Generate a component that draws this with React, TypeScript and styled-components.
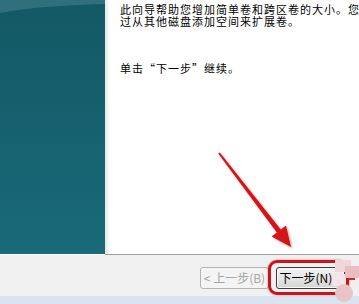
import styled, {createGlobalStyle} from "styled-components";

const TEAL_TOP = "rgb(19, 88, 101)";
const TEAL_BOTTOM = "rgb(25, 106, 122)";
const HIGHLIGHT_RED = "rgb(196, 22, 28)";
const MAIN_HEIGHT = 254;

const GlobalStyle = createGlobalStyle`
    html, body {
        margin: 0;
        padding: 0;
        background: #ffffff;
    }
    body {
        font-family: "Noto Sans CJK SC", "Noto Sans", sans-serif;
        font-size: 12px;
    }
`;

const Window = styled.div`
    width: 359px;
    height: 304px;
    position: relative;
    overflow: hidden;
    display: flex;
    flex-direction: column;
`;

const Main = styled.div`
    height: ${MAIN_HEIGHT}px;
    display: flex;
`;

const Sidebar = styled.div`
    width: 105px;
    flex: 0 0 105px;
    position: relative;
    overflow: hidden;
    background: linear-gradient(180deg, ${TEAL_TOP} 0%, ${TEAL_BOTTOM} 100%);
`;

const SidebarGlow = styled.svg`
    display: block;
    width: 105px;
    height: 16px;
`;

const Content = styled.div`
    flex: 1;
    padding: 3px 0 0 10px;
    background: linear-gradient(90deg, #e4e6e6 0, #ffffff 5px, #ffffff 100%);
    color: #000000;
    white-space: nowrap;
`;

const Line = styled.div<{gap?: number}>`
    margin: ${props => props.gap ?? 0}px 0 0 5px;
    height: 12px;
    font-size: 11px;
    letter-spacing: 1px;
    line-height: 12px;
`;

const Divider = styled.div`
    height: 1px;
    margin-left: 105px;
    background: #a0a0a0;
`;

const Footer = styled.div`
    flex: 1;
    background: #f0f0f0;
    display: flex;
    justify-content: flex-end;
    align-items: flex-start;
    gap: 7px;
    padding: 12px 14px 0 0;
`;

const Button = styled.button<{primary?: boolean}>`
    width: 69px;
    height: 22px;
    padding: 0;
    border-radius: 3px;
    font-family: "Noto Sans CJK SC", "Noto Sans", sans-serif;
    font-size: 12px;
    line-height: 20px;
    border: 1px solid ${props => (props.primary ? "#3c3c3c" : "#b4b4b4")};
    color: ${props => (props.primary ? "#000000" : "#a6a6a6")};
    background: ${props => (props.primary ? "linear-gradient(180deg, #f2f2f2 0%, #e6e6e6 50%, #d4d4d4 100%)" : "#f4f4f4")};
    box-shadow: ${props => (props.primary ? "inset 0 0 0 1px #f8f8f8" : "none")};
`;

const Highlight = styled.div`
    position: relative;
    &::after {
        content: "";
        position: absolute;
        left: -8px;
        top: -7px;
        right: -4px;
        bottom: -6px;
        border: 3px solid ${HIGHLIGHT_RED};
        border-radius: 9px;
        box-shadow: 0 0 2px rgba(196, 22, 28, 0.6);
        pointer-events: none;
    }
`;

const BottomStrip = styled.div`
    height: 8px;
    background: #d9e4ef;
`;

const ArrowLayer = styled.svg`
    position: absolute;
    left: 212px;
    top: 148px;
    width: 90px;
    height: 106px;
    pointer-events: none;
`;

const Watermark = styled.svg`
    position: absolute;
    left: 333px;
    top: 258px;
    width: 26px;
    height: 44px;
    pointer-events: none;
`;

const ARROW_POINTS = "6.2,5.6 64.8,84.5 59.6,88.5 79,99 74,77.5 68.8,81.5 7.8,4.4";

export default function App() {
    return (
        <Window>
            <GlobalStyle />
            <Main>
                <Sidebar>
                    <SidebarGlow viewBox="0 0 105 16">
                        <path d="M0 0 H105 V4 C70 5 30 7 0 13 Z" fill="rgb(48, 112, 124)" />
                    </SidebarGlow>
                </Sidebar>
                <Content>
                    <Line>此向导帮助您增加简单卷和跨区卷的大小。您</Line>
                    <Line>过从其他磁盘添加空间来扩展卷。</Line>
                    <Line gap={35}>单击“下一步”继续。</Line>
                </Content>
            </Main>
            <Divider />
            <Footer>
                <Button disabled>&lt; 上一步(B)</Button>
                <Highlight>
                    <Button primary>下一步(N) &gt;</Button>
                </Highlight>
            </Footer>
            <BottomStrip />
            <ArrowLayer viewBox="0 0 90 106">
                <defs>
                    <filter id="blur" x="-20%" y="-20%" width="140%" height="140%">
                        <feGaussianBlur stdDeviation="1.2" />
                    </filter>
                </defs>
                <polygon points={ARROW_POINTS} fill="rgba(120, 0, 0, 0.35)" filter="url(#blur)" transform="translate(1.5 1.5)" />
                <polygon points={ARROW_POINTS} fill="rgb(214, 20, 24)" />
            </ArrowLayer>
            <Watermark viewBox="0 0 26 44">
                <rect x="2" y="2" width="16" height="12" fill="rgb(240, 214, 216)" />
                <rect x="12" y="8" width="14" height="12" fill="rgb(232, 190, 194)" />
                <rect x="0" y="16" width="12" height="12" fill="rgb(246, 228, 230)" />
                <rect x="16" y="20" width="6" height="2" fill="rgb(210, 40, 46)" />
                <circle cx="11" cy="35" r="9" fill="rgb(232, 196, 200)" />
            </Watermark>
        </Window>
    );
}
